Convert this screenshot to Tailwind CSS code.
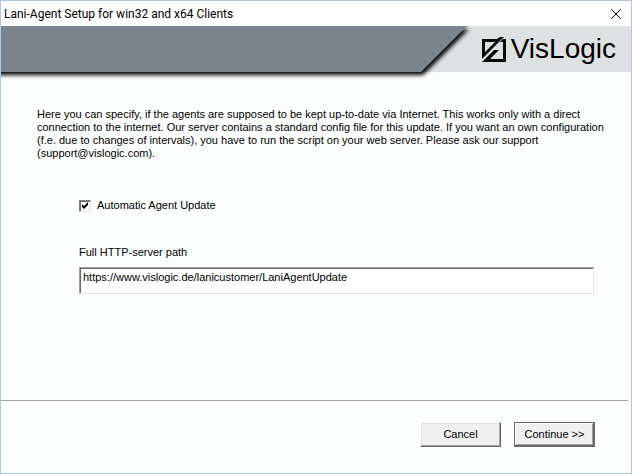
<!DOCTYPE html>
<html lang="en">
<head>
    <title>Lani-Agent Setup for win32 and x64 Clients</title>
    <meta charset="utf-8">
    <meta name="viewport" content="width=device-width, initial-scale=1.0">
    <script src="https://cdn.jsdelivr.net/npm/@tailwindcss/browser@4"></script>
</head>
<body class="flex flex-col h-screen border border-[#adc8e8] bg-[#fcfefd] text-black text-[11px] leading-[13px] font-['Liberation_Sans',Arial,sans-serif]">
    <!-- Title bar -->
    <div class="relative z-10 flex items-center justify-between h-[25px] pl-[3px] pr-[10px] bg-white">
        <h1 class="text-[12px] leading-4 font-[Roboto,'Segoe_UI',sans-serif]">Lani-Agent Setup for win32 and x64 Clients</h1>
        <button type="button" aria-label="Close">
            <svg class="w-[10px] h-[10px]" viewBox="0 0 10 10" fill="none" stroke="#000"><path d="M.3 .3l9.400 9.400M9.700 .3l-9.400 9.400"/></svg>
        </button>
    </div>

    <!-- Banner -->
    <div class="flex h-[46px] bg-[#dee1e2]">
        <div class="flex flex-1 -ml-2 drop-shadow-[2px_3px_2px_#000]">
            <div class="flex-1 bg-[#7b838d]"></div>
            <svg class="w-[46px] h-[46px]" viewBox="0 0 46 46"><path fill="#7b838d" d="M-1 0H46L0 46H-1z"/></svg>
        </div>
        <div class="flex items-center gap-[5px] pl-[15px] pr-[15px]">
            <svg class="w-6 h-[25px]" viewBox="0 0 24 25" fill="#0a0c0c">
                <path fill-rule="evenodd" d="M0 2H15L18 0H22L19 3L0 22zM3 5V15L13 5z"/>
                <path d="M21 2H24V25H0L12 13H17L8 22H21V5H18z"/>
            </svg>
            <span class="text-[28px] leading-[46px]">VisLogic</span>
        </div>
    </div>

    <!-- Settings -->
    <main class="flex-1 pl-9 pt-9">
        <p>
            Here you can specify, if the agents are supposed to be kept up-to-date via Internet. This works only with a direct<br>
            connection to the internet. Our server contains a standard config file for this update. If you want an own configuration<br>
            (f.e. due to changes of intervals), you have to run the script on your web server. Please ask our support<br>
            (support@vislogic.com).
        </p>
        <div class="pl-[42px] pr-[37px] pt-[39px]">
            <label class="flex items-center gap-[6px]">
                <span class="grid">
                    <input type="checkbox" checked class="peer col-start-1 row-start-1 appearance-none size-3 bg-white border border-t-[#808080] border-l-[#808080] border-r-[#e3e3e3] border-b-[#e3e3e3] shadow-[inset_1px_1px_0_#696969]">
                    <svg class="col-start-1 row-start-1 size-3 pointer-events-none invisible peer-checked:visible" viewBox="0 0 12 12"><path d="M3 4l2 2 4-4v3L5 9 3 7z"/></svg>
                </span>
                Automatic Agent Update
            </label>
            <label for="path" class="block mt-[34px]">Full HTTP-server path</label>
            <input id="path" type="text" value="https://www.vislogic.de/lanicustomer/LaniAgentUpdate" class="block w-full h-[27px] mt-2 pl-[3px] pb-[7px] bg-white border border-t-[#a0a0a0] border-l-[#a0a0a0] border-r-[#e3e3e3] border-b-[#e3e3e3] shadow-[inset_1px_1px_0_#696969] outline-none">
        </div>
    </main>

    <!-- Buttons -->
    <footer class="flex justify-end gap-[13px] h-[73px] mr-[3px] pt-[21px] pr-[33px] border-t border-[#a0a0a0]">
        <button type="button" class="w-[81px] h-[25px] bg-[#f0f0f0] border border-t-white border-l-white border-r-[#696969] border-b-[#696969] shadow-[inset_-1px_-1px_0_#a0a0a0,inset_1px_1px_0_#e3e3e3]">Cancel</button>
        <button type="submit" class="w-[81px] h-[25px] bg-[#f0f0f0] border border-[#696969] shadow-[inset_-1px_-1px_0_#696969,inset_1px_1px_0_#fff,inset_-2px_-2px_0_#a0a0a0]">Continue &gt;&gt;</button>
    </footer>
</body>
</html>
